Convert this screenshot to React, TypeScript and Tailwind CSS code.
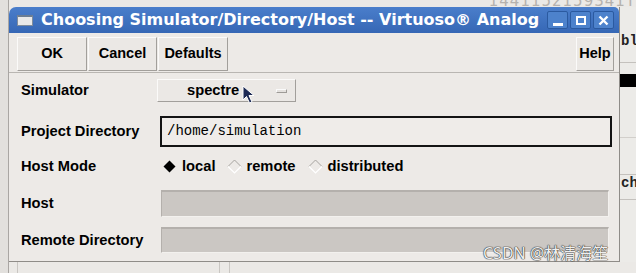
import { ReactNode } from "react";

const raised =
    "bg-[#ebe8e5] border border-t-[#fbfaf9] border-l-[#fbfaf9] border-r-[#a29f9b] border-b-[#a29f9b]";

const ToolButton = ({ label, width }: { label: string; width: string }) => (
    <button className={`${raised} ${width} h-[34px] flex items-center justify-center text-[14.5px] font-bold text-black`}>
        {label}
    </button>
);

const TitleButton = ({ children }: { children: ReactNode }) => (
    <div className="w-[21px] h-[18px] rounded-[2px] border border-[#2b5aa0] bg-[#4d82cc] flex items-center justify-center">
        {children}
    </div>
);

const Diamond = ({ filled }: { filled?: boolean }) => (
    <svg width="15" height="15" viewBox="0 0 15 15">
        {filled ? (
            <polygon points="7.5,1.5 13.5,7.5 7.5,13.5 1.5,7.5" fill="#000" />
        ) : (
            <>
                <polyline points="1,7.5 7.5,1 14,7.5" fill="none" stroke="#a7a4a0" strokeWidth="1" />
                <polyline points="1,7.5 7.5,14 14,7.5" fill="none" stroke="#ffffff" strokeWidth="1.2" />
            </>
        )}
    </svg>
);

const Row = ({ label, className, children }: { label: string; className: string; children: ReactNode }) => (
    <div className={`flex items-center ${className}`}>
        <div className="w-[151px] shrink-0 pl-[12px] text-[14.7px] font-bold text-black whitespace-nowrap">{label}</div>
        {children}
    </div>
);

const App = () => {
    return (
        <div className="w-[636px] h-[273px] overflow-hidden bg-[#ebe9e6] flex flex-col relative font-['Liberation_Sans',sans-serif]">
            {/* Desktop behind, top strip */}
            <div className="h-[7px] flex overflow-hidden">
                <div className="w-[9px] h-full bg-[#e2e0dd] border-r border-[#a9a6a3]" />
                <div className="flex-1 flex justify-end overflow-hidden">
                    <span className="text-[15px] leading-[15px] -mt-[6px] text-[#b5b2ae] font-['DejaVu_Sans',sans-serif] whitespace-nowrap tracking-[1px]">
                        1441152159341T
                    </span>
                </div>
            </div>

            <div className="flex h-[255px]">
                {/* Left edge of the desktop */}
                <div className="w-[9px] bg-[#e2e0dd] border-r border-[#a9a6a3]" />

                {/* Dialog window */}
                <div className="w-[611px] flex flex-col bg-[#edeae7] border-r border-b border-[#8f8c88]">
                    {/* Title bar */}
                    <div className="h-[26px] bg-gradient-to-b from-[#4a7ecb] to-[#3667b5] rounded-tl-[7px] rounded-tr-[5px] flex items-center pl-[8px] pr-[5px]">
                        <div className="w-[16px] h-[11px] bg-[#e9e9e9] border border-[#7f8c9c] border-t-[2px] border-t-[#6b7d93]" />
                        <span className="ml-[8px] text-white font-bold text-[16px] leading-[18px] whitespace-nowrap font-['DejaVu_Sans',sans-serif]">
                            Choosing Simulator/Directory/Host -- Virtuoso® Analog
                        </span>
                        <div className="ml-auto flex gap-[2px]">
                            <TitleButton>
                                <div className="w-[10px] h-[3px] bg-white mt-[8px]" />
                            </TitleButton>
                            <TitleButton>
                                <div className="w-[10px] h-[9px] border-2 border-white" />
                            </TitleButton>
                            <TitleButton>
                                <svg width="11" height="11" viewBox="0 0 11 11">
                                    <path d="M1.5 1.5L9.5 9.5M9.5 1.5L1.5 9.5" stroke="#fff" strokeWidth="2.4" />
                                </svg>
                            </TitleButton>
                        </div>
                    </div>

                    {/* Toolbar */}
                    <div className="h-[40px] flex items-start pt-[4px] pl-[8px] pr-[5px] border-b border-[#b9b6b2]">
                        <div className="flex gap-[1px]">
                            <ToolButton label="OK" width="w-[70px]" />
                            <ToolButton label="Cancel" width="w-[69px]" />
                            <ToolButton label="Defaults" width="w-[70px]" />
                        </div>
                        <div className="ml-auto">
                            <ToolButton label="Help" width="w-[38px]" />
                        </div>
                    </div>

                    {/* Form */}
                    <div className="flex flex-col">
                        <Row label="Simulator" className="mt-[6px] h-[23px]">
                            <div className={`${raised} -ml-[3px] w-[139px] h-[23px] flex items-center relative`}>
                                <span className="ml-[29px] text-[14.7px] font-bold text-black">spectre</span>
                                <div className="ml-auto mr-[8px] w-[11px] h-[4px] bg-[#e4e1de] border border-t-[#fafafa] border-l-[#fafafa] border-r-[#9e9b97] border-b-[#9e9b97]" />
                                <svg className="absolute left-[84px] top-[5px]" width="14" height="20" viewBox="0 0 14 20">
                                    <path d="M1 1 L1 15 L4.5 11.5 L7.5 18 L10 17 L7 10.5 L12 10.5 Z" fill="#1d2a55" stroke="#fff" strokeWidth="1" />
                                </svg>
                            </div>
                        </Row>

                        <Row label="Project Directory" className="mt-[14px] h-[31px]">
                            <div className="w-[452px] h-[31px] border-2 border-[#141414] bg-[#efece9] flex items-center pl-[5px]">
                                <span className="text-[14px] text-black font-['Liberation_Mono',monospace]">/home/simulation</span>
                            </div>
                        </Row>

                        <Row label="Host Mode" className="mt-[10px] h-[18px]">
                            <div className="flex items-center ml-[2px] text-[14.7px] font-bold text-black">
                                <Diamond filled />
                                <span className="ml-[5px]">local</span>
                                <span className="ml-[12px]"><Diamond /></span>
                                <span className="ml-[4px]">remote</span>
                                <span className="ml-[13px]"><Diamond /></span>
                                <span className="ml-[4px]">distributed</span>
                            </div>
                        </Row>

                        <Row label="Host" className="mt-[15px] h-[27px]">
                            <div className="ml-[1px] w-[448px] h-[27px] bg-[#cbc7c3] border-t-2 border-l border-t-[#b4b0ac] border-l-[#b4b0ac] border-r border-b border-r-[#f3f1ee] border-b-[#f3f1ee]" />
                        </Row>

                        <Row label="Remote Directory" className="mt-[10px] h-[26px]">
                            <div className="ml-[1px] w-[448px] h-[26px] bg-[#cbc7c3] border-t-2 border-l border-t-[#b4b0ac] border-l-[#b4b0ac] border-r border-b border-r-[#f3f1ee] border-b-[#f3f1ee]" />
                        </Row>
                    </div>
                </div>

                {/* Right edge of the desktop */}
                <div className="flex-1 flex flex-col bg-[#ecebe8] overflow-hidden">
                    <div className="h-[27px]" />
                    <div className="h-[15px] text-[14px] leading-[15px] font-bold font-['Liberation_Mono',monospace] text-[#222] pl-[1px] whitespace-nowrap">bl</div>
                    <div className="h-[13px]" />
                    <div className="h-[1px] bg-[#c4c1bd]" />
                    <div className="h-[11px]" />
                    <div className="h-[13px] bg-black" />
                    <div className="h-[51px] border-b border-[#d2cfcb]" />
                    <div className="h-[37px] border-b border-[#c4c1bd]" />
                    <div className="h-[17px] text-[14px] leading-[17px] font-bold font-['Liberation_Mono',monospace] text-[#222] pl-[1px] whitespace-nowrap">ch</div>
                    <div className="h-[8px] border-b border-[#c4c1bd]" />
                </div>
            </div>

            {/* Desktop behind, bottom strip */}
            <div className="flex-1 flex">
                <div className="w-[9px] bg-[#e2e0dd] border-r border-[#a9a6a3]" />
                <div className="w-[9px] border-r border-[#c9c6c2]" />
                <div className="w-[202px] border-r border-[#c9c6c2]" />
                <div className="w-[10px] border-r border-[#c9c6c2]" />
            </div>

            {/* Watermark */}
            <div className="absolute left-[483px] top-[244px] text-[16px] leading-[18px] text-[#eeeeee] whitespace-nowrap font-['Noto_Sans','Noto_Sans_CJK_SC',sans-serif] [text-shadow:0_0_1px_#333,0_0_1px_#333,0_0_1px_#333]">
                CSDN @林清海笙
            </div>
        </div>
    );
};

export default App;
